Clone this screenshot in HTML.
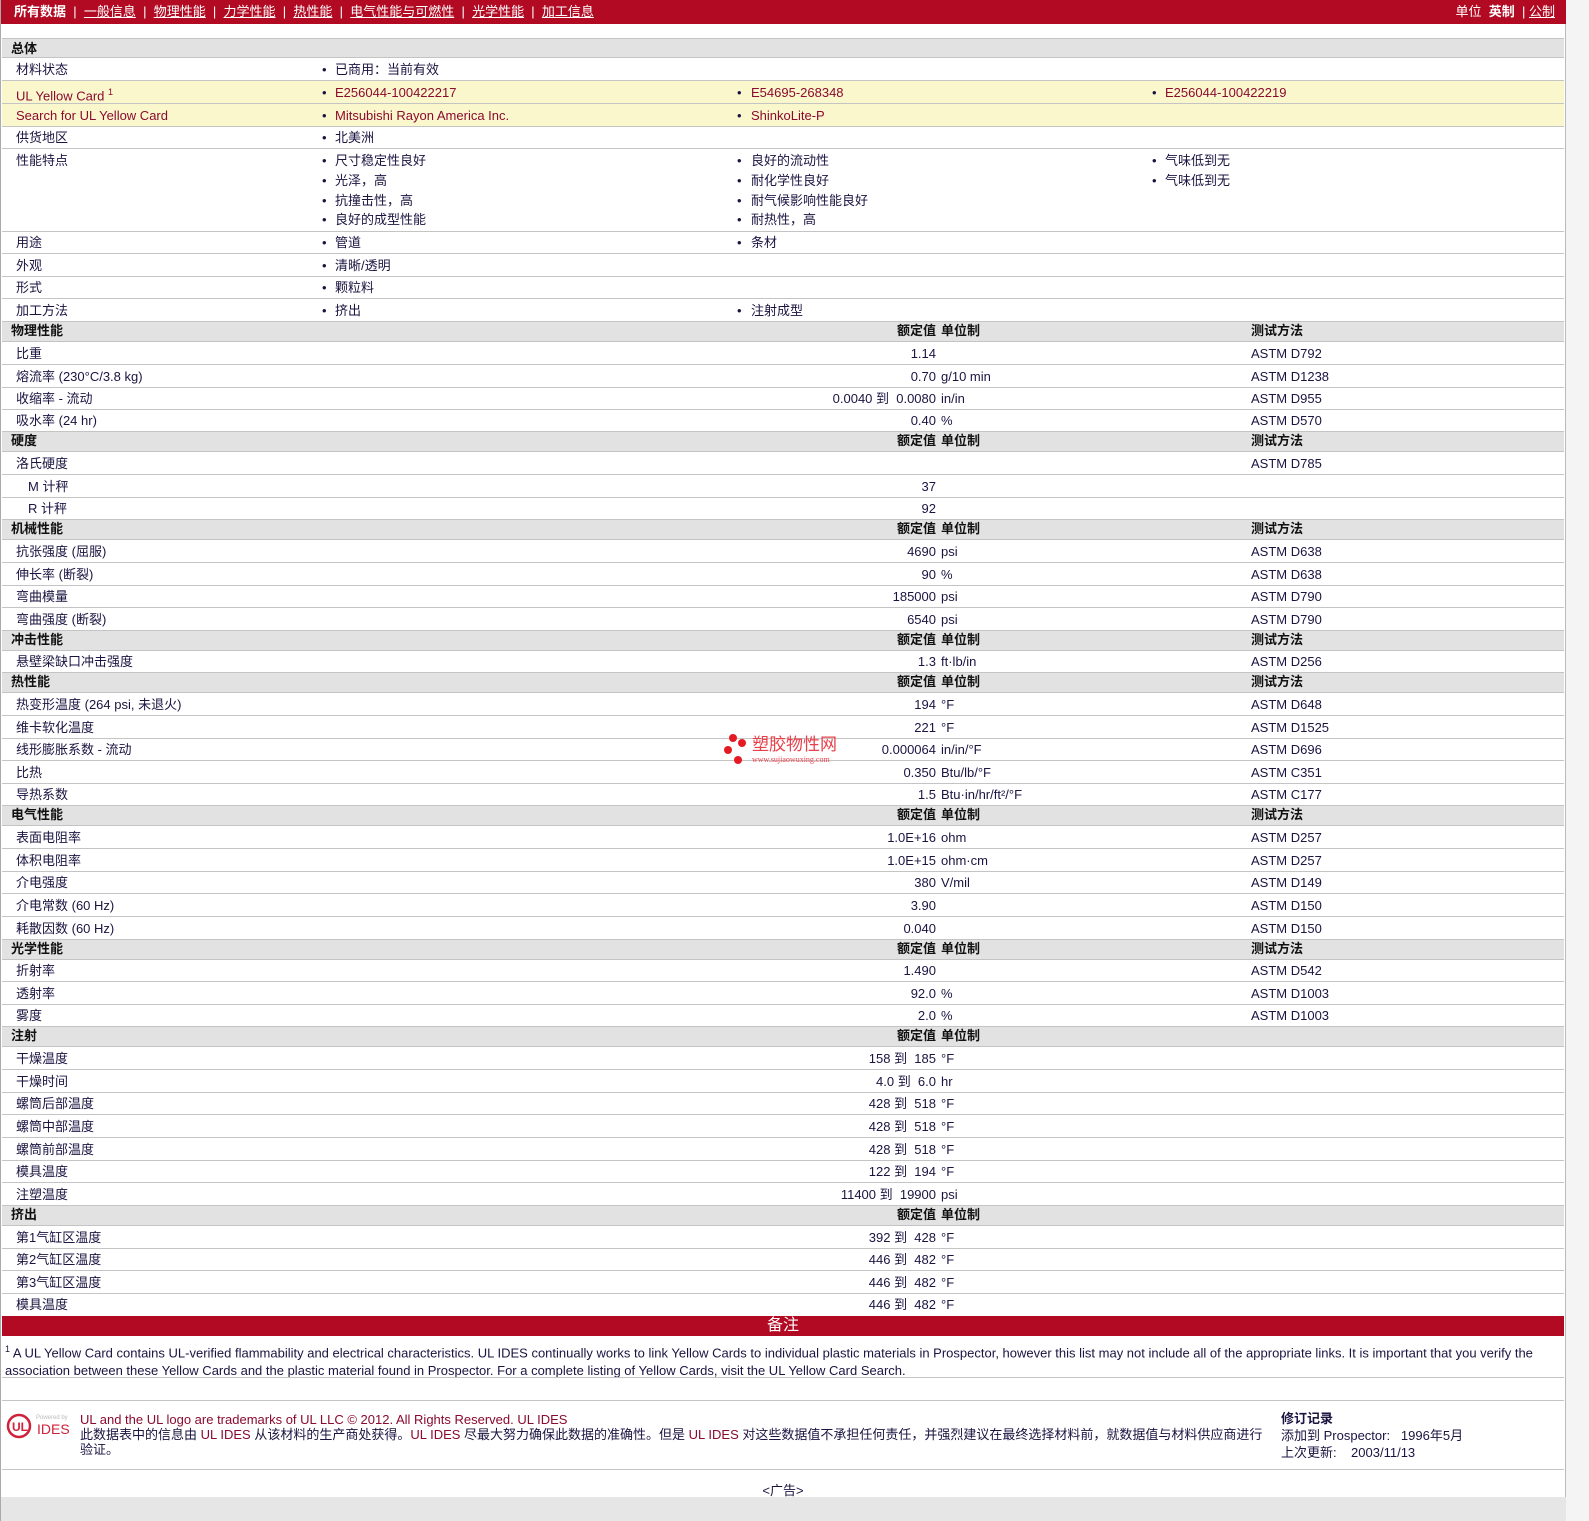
<!DOCTYPE html>
<html><head><meta charset="utf-8"><style>
*{margin:0;padding:0;box-sizing:border-box}
body{width:1589px;height:1521px;position:relative;background:#fff;font-family:"Liberation Sans","Noto Sans CJK SC",sans-serif;font-size:13px;color:#1a1440;overflow:hidden}
#pg{position:absolute;left:0;top:0;width:1566px;height:1521px;border-left:1px solid #aaa;border-right:1px solid #bbb;background:#fff}
#side{position:absolute;left:1566px;top:0;width:23px;height:1521px;background:#f4f4f4}
.bar{position:absolute;left:0;top:0;width:1566px;height:24px;background:#b20a22;color:#fff;font-size:13px;line-height:24px}
.bar a{color:#fff;text-decoration:underline}
.r{position:absolute;left:1px;width:1562px;border-bottom:1px solid #c4c4c4}
.r i{position:absolute;font-style:normal;white-space:nowrap}
.h{background:#e2e2e2;font-weight:bold;color:#111}
.y{background:#fbf7cc}
.l{left:14px}.s{left:26px}
.hl{left:9px}
.v{right:628px;text-align:right}
.u{left:939px}
.m{left:1249px}
.b1{left:320px}.b2{left:735px}.b3{left:1150px}
.t1{left:333px}.t2{left:749px}.t3{left:1163px}
.lk{color:#8a0a30}
.hv{right:628px}.hu{left:939px}.hm{left:1249px}
</style></head><body>
<div id="pg">
<div class="bar"><span style="position:absolute;left:13px"><b>所有数据</b> &nbsp;| &nbsp;<a>一般信息</a> &nbsp;| &nbsp;<a>物理性能</a> &nbsp;| &nbsp;<a>力学性能</a> &nbsp;| &nbsp;<a>热性能</a> &nbsp;| &nbsp;<a>电气性能与可燃性</a> &nbsp;| &nbsp;<a>光学性能</a> &nbsp;| &nbsp;<a>加工信息</a></span><span style="position:absolute;right:12px">单位 &nbsp;<b>英制</b> &nbsp;| <a>公制</a></span></div>
<div class="r" style="top:24px;height:15px;border-bottom:1px solid #c4c4c4"></div>

<div class="r h" style="top:39px;height:19px;line-height:19px"><i class="hl">总体</i></div>
<div class="r" style="top:58px;height:23px;line-height:23px"><i class="l">材料状态</i><i class="b1">•</i><i class="t1">已商用：当前有效</i></div>
<div class="r y" style="top:81px;height:23px;line-height:23px"><i class="l lk">UL Yellow Card <sup style="font-size:9px">1</sup></i><i class="b1">•</i><i class="t1 lk">E256044-100422217</i><i class="b2">•</i><i class="t2 lk">E54695-268348</i><i class="b3">•</i><i class="t3 lk">E256044-100422219</i></div>
<div class="r y" style="top:104px;height:23px;line-height:23px"><i class="l lk">Search for UL Yellow Card</i><i class="b1">•</i><i class="t1 lk">Mitsubishi Rayon America Inc.</i><i class="b2">•</i><i class="t2 lk">ShinkoLite-P</i></div>
<div class="r" style="top:127px;height:22px;line-height:22px"><i class="l">供货地区</i><i class="b1">•</i><i class="t1">北美洲</i></div>
<div class="r" style="top:149px;height:83px;line-height:20px;padding-top:2px"><i class="l" style="top:2px">性能特点</i>
<i class="b1" style="top:2px">•</i><i class="t1" style="top:2px">尺寸稳定性良好</i><i class="b1" style="top:22px">•</i><i class="t1" style="top:22px">光泽，高</i><i class="b1" style="top:42px">•</i><i class="t1" style="top:42px">抗撞击性，高</i><i class="b1" style="top:61px">•</i><i class="t1" style="top:61px">良好的成型性能</i>
<i class="b2" style="top:2px">•</i><i class="t2" style="top:2px">良好的流动性</i><i class="b2" style="top:22px">•</i><i class="t2" style="top:22px">耐化学性良好</i><i class="b2" style="top:42px">•</i><i class="t2" style="top:42px">耐气候影响性能良好</i><i class="b2" style="top:61px">•</i><i class="t2" style="top:61px">耐热性，高</i>
<i class="b3" style="top:2px">•</i><i class="t3" style="top:2px">气味低到无</i><i class="b3" style="top:22px">•</i><i class="t3" style="top:22px">气味低到无</i></div>
<div class="r" style="top:232px;height:22px;line-height:22px"><i class="l">用途</i><i class="b1">•</i><i class="t1">管道</i><i class="b2">•</i><i class="t2">条材</i></div>
<div class="r" style="top:254px;height:23px;line-height:23px"><i class="l">外观</i><i class="b1">•</i><i class="t1">清晰/透明</i></div>
<div class="r" style="top:277px;height:22px;line-height:22px"><i class="l">形式</i><i class="b1">•</i><i class="t1">颗粒料</i></div>
<div class="r" style="top:299px;height:23px;line-height:23px"><i class="l">加工方法</i><i class="b1">•</i><i class="t1">挤出</i><i class="b2">•</i><i class="t2">注射成型</i></div>

<div class="r h" style="top:322px;height:20px;line-height:18px"><i class="hl">物理性能</i><i class="hv">额定值</i><i class="hu">单位制</i><i class="hm">测试方法</i></div>
<div class="r" style="top:342px;height:23px;line-height:23px"><i class="l">比重</i><i class="v">1.14</i><i class="m">ASTM D792</i></div>
<div class="r" style="top:365px;height:23px;line-height:23px"><i class="l">熔流率 (230°C/3.8 kg)</i><i class="v">0.70</i><i class="u">g/10 min</i><i class="m">ASTM D1238</i></div>
<div class="r" style="top:388px;height:22px;line-height:22px"><i class="l">收缩率 - 流动</i><i class="v">0.0040 到 &nbsp;0.0080</i><i class="u">in/in</i><i class="m">ASTM D955</i></div>
<div class="r" style="top:410px;height:22px;line-height:22px"><i class="l">吸水率 (24 hr)</i><i class="v">0.40</i><i class="u">%</i><i class="m">ASTM D570</i></div>

<div class="r h" style="top:432px;height:20px;line-height:18px"><i class="hl">硬度</i><i class="hv">额定值</i><i class="hu">单位制</i><i class="hm">测试方法</i></div>
<div class="r" style="top:452px;height:23px;line-height:23px"><i class="l">洛氏硬度</i><i class="m">ASTM D785</i></div>
<div class="r" style="top:475px;height:23px;line-height:23px"><i class="s">M 计秤</i><i class="v">37</i></div>
<div class="r" style="top:498px;height:22px;line-height:22px"><i class="s">R 计秤</i><i class="v">92</i></div>

<div class="r h" style="top:520px;height:20px;line-height:18px"><i class="hl">机械性能</i><i class="hv">额定值</i><i class="hu">单位制</i><i class="hm">测试方法</i></div>
<div class="r" style="top:540px;height:23px;line-height:23px"><i class="l">抗张强度 (屈服)</i><i class="v">4690</i><i class="u">psi</i><i class="m">ASTM D638</i></div>
<div class="r" style="top:563px;height:23px;line-height:23px"><i class="l">伸长率 (断裂)</i><i class="v">90</i><i class="u">%</i><i class="m">ASTM D638</i></div>
<div class="r" style="top:586px;height:22px;line-height:22px"><i class="l">弯曲模量</i><i class="v">185000</i><i class="u">psi</i><i class="m">ASTM D790</i></div>
<div class="r" style="top:608px;height:23px;line-height:23px"><i class="l">弯曲强度 (断裂)</i><i class="v">6540</i><i class="u">psi</i><i class="m">ASTM D790</i></div>

<div class="r h" style="top:631px;height:20px;line-height:18px"><i class="hl">冲击性能</i><i class="hv">额定值</i><i class="hu">单位制</i><i class="hm">测试方法</i></div>
<div class="r" style="top:651px;height:22px;line-height:22px"><i class="l">悬壁梁缺口冲击强度</i><i class="v">1.3</i><i class="u">ft·lb/in</i><i class="m">ASTM D256</i></div>

<div class="r h" style="top:673px;height:20px;line-height:18px"><i class="hl">热性能</i><i class="hv">额定值</i><i class="hu">单位制</i><i class="hm">测试方法</i></div>
<div class="r" style="top:693px;height:23px;line-height:23px"><i class="l">热变形温度 (264 psi, 未退火)</i><i class="v">194</i><i class="u">°F</i><i class="m">ASTM D648</i></div>
<div class="r" style="top:716px;height:23px;line-height:23px"><i class="l">维卡软化温度</i><i class="v">221</i><i class="u">°F</i><i class="m">ASTM D1525</i></div>
<div class="r" style="top:739px;height:22px;line-height:22px"><i class="l">线形膨胀系数 - 流动</i><i class="v">0.000064</i><i class="u">in/in/°F</i><i class="m">ASTM D696</i></div>
<div class="r" style="top:761px;height:23px;line-height:23px"><i class="l">比热</i><i class="v">0.350</i><i class="u">Btu/lb/°F</i><i class="m">ASTM C351</i></div>
<div class="r" style="top:784px;height:22px;line-height:22px"><i class="l">导热系数</i><i class="v">1.5</i><i class="u">Btu·in/hr/ft²/°F</i><i class="m">ASTM C177</i></div>

<div class="r h" style="top:806px;height:20px;line-height:18px"><i class="hl">电气性能</i><i class="hv">额定值</i><i class="hu">单位制</i><i class="hm">测试方法</i></div>
<div class="r" style="top:826px;height:23px;line-height:23px"><i class="l">表面电阻率</i><i class="v">1.0E+16</i><i class="u">ohm</i><i class="m">ASTM D257</i></div>
<div class="r" style="top:849px;height:23px;line-height:23px"><i class="l">体积电阻率</i><i class="v">1.0E+15</i><i class="u">ohm·cm</i><i class="m">ASTM D257</i></div>
<div class="r" style="top:872px;height:22px;line-height:22px"><i class="l">介电强度</i><i class="v">380</i><i class="u">V/mil</i><i class="m">ASTM D149</i></div>
<div class="r" style="top:894px;height:23px;line-height:23px"><i class="l">介电常数 (60 Hz)</i><i class="v">3.90</i><i class="m">ASTM D150</i></div>
<div class="r" style="top:917px;height:23px;line-height:23px"><i class="l">耗散因数 (60 Hz)</i><i class="v">0.040</i><i class="m">ASTM D150</i></div>

<div class="r h" style="top:940px;height:20px;line-height:18px"><i class="hl">光学性能</i><i class="hv">额定值</i><i class="hu">单位制</i><i class="hm">测试方法</i></div>
<div class="r" style="top:960px;height:22px;line-height:22px"><i class="l">折射率</i><i class="v">1.490</i><i class="m">ASTM D542</i></div>
<div class="r" style="top:982px;height:23px;line-height:23px"><i class="l">透射率</i><i class="v">92.0</i><i class="u">%</i><i class="m">ASTM D1003</i></div>
<div class="r" style="top:1005px;height:22px;line-height:22px"><i class="l">雾度</i><i class="v">2.0</i><i class="u">%</i><i class="m">ASTM D1003</i></div>

<div class="r h" style="top:1027px;height:20px;line-height:18px"><i class="hl">注射</i><i class="hv">额定值</i><i class="hu">单位制</i></div>
<div class="r" style="top:1047px;height:23px;line-height:23px"><i class="l">干燥温度</i><i class="v">158 到 &nbsp;185</i><i class="u">°F</i></div>
<div class="r" style="top:1070px;height:23px;line-height:23px"><i class="l">干燥时间</i><i class="v">4.0 到 &nbsp;6.0</i><i class="u">hr</i></div>
<div class="r" style="top:1093px;height:22px;line-height:22px"><i class="l">螺筒后部温度</i><i class="v">428 到 &nbsp;518</i><i class="u">°F</i></div>
<div class="r" style="top:1115px;height:23px;line-height:23px"><i class="l">螺筒中部温度</i><i class="v">428 到 &nbsp;518</i><i class="u">°F</i></div>
<div class="r" style="top:1138px;height:23px;line-height:23px"><i class="l">螺筒前部温度</i><i class="v">428 到 &nbsp;518</i><i class="u">°F</i></div>
<div class="r" style="top:1161px;height:22px;line-height:22px"><i class="l">模具温度</i><i class="v">122 到 &nbsp;194</i><i class="u">°F</i></div>
<div class="r" style="top:1183px;height:23px;line-height:23px"><i class="l">注塑温度</i><i class="v">11400 到 &nbsp;19900</i><i class="u">psi</i></div>

<div class="r h" style="top:1206px;height:20px;line-height:18px"><i class="hl">挤出</i><i class="hv">额定值</i><i class="hu">单位制</i></div>
<div class="r" style="top:1226px;height:23px;line-height:23px"><i class="l">第1气缸区温度</i><i class="v">392 到 &nbsp;428</i><i class="u">°F</i></div>
<div class="r" style="top:1249px;height:22px;line-height:22px"><i class="l">第2气缸区温度</i><i class="v">446 到 &nbsp;482</i><i class="u">°F</i></div>
<div class="r" style="top:1271px;height:23px;line-height:23px"><i class="l">第3气缸区温度</i><i class="v">446 到 &nbsp;482</i><i class="u">°F</i></div>
<div class="r" style="top:1294px;height:22px;line-height:22px;border-bottom:none"><i class="l">模具温度</i><i class="v">446 到 &nbsp;482</i><i class="u">°F</i></div>

<div style="position:absolute;left:1px;top:1316px;width:1562px;height:20px;background:#b20a22;color:#fff;font-size:16px;line-height:20px;text-align:center">备注</div>
<div style="position:absolute;left:4px;top:1340px;width:1556px;line-height:18px;font-size:13px"><sup style="font-size:9px">1</sup> A UL Yellow Card contains UL-verified flammability and electrical characteristics. UL IDES continually works to link Yellow Cards to individual plastic materials in Prospector, however this list may not include all of the appropriate links. It is important that you verify the association between these Yellow Cards and the plastic material found in Prospector. For a complete listing of Yellow Cards, visit the UL Yellow Card Search.</div>
<div class="r" style="top:1377px;height:1px;background:#c4c4c4;border:none"></div>
<div class="r" style="top:1400px;height:1px;background:#c4c4c4;border:none"></div>

<svg style="position:absolute;left:5px;top:1412px" width="70" height="30" viewBox="0 0 70 30"><circle cx="13" cy="14" r="11" fill="none" stroke="#d0203a" stroke-width="2.5"/><text x="6" y="19" font-size="12" font-weight="bold" fill="#d0203a" font-family="Liberation Sans">UL</text><text x="30" y="7" font-size="6" fill="#bbb" font-family="Liberation Sans">Powered by</text><text x="31" y="22" font-size="14" fill="#d0203a" font-family="Liberation Sans">IDES</text></svg>
<div style="position:absolute;left:79px;top:1412px;width:1195px;line-height:15px;font-size:13px"><span class="lk">UL and the UL logo are trademarks of UL LLC © 2012. All Rights Reserved. UL IDES</span><br>此数据表中的信息由 <span class="lk">UL IDES</span> 从该材料的生产商处获得。<span class="lk">UL IDES</span> 尽最大努力确保此数据的准确性。但是 <span class="lk">UL IDES</span> 对这些数据值不承担任何责任，并强烈建议在最终选择材料前，就数据值与材料供应商进行验证。</div>
<div style="position:absolute;left:1280px;top:1410px;line-height:17px;font-size:13px"><b>修订记录</b><br>添加到 Prospector: &nbsp;&nbsp;1996年5月<br>上次更新: &nbsp;&nbsp;&nbsp;2003/11/13</div>
<div class="r" style="top:1469px;height:1px;background:#c4c4c4;border:none"></div>
<div style="position:absolute;left:0;top:1480px;width:1564px;text-align:center;font-size:13px">&lt;广告&gt;</div>
<div style="position:absolute;left:0;top:1497px;width:1566px;height:24px;background:#e6e6e6"></div>

<div style="position:absolute;left:722px;top:733px;width:130px;height:36px">
<span style="position:absolute;left:6px;top:1px;width:8px;height:8px;border-radius:50%;background:#e41b23"></span>
<span style="position:absolute;left:15px;top:6px;width:8px;height:8px;border-radius:50%;background:#e41b23"></span>
<span style="position:absolute;left:1px;top:13px;width:8px;height:8px;border-radius:50%;background:#e41b23"></span>
<span style="position:absolute;left:11px;top:23px;width:8px;height:8px;border-radius:50%;background:#e41b23"></span>
<span style="position:absolute;left:29px;top:3px;font-size:17px;color:#e8404a;line-height:18px">塑胶物性网</span>
<span style="position:absolute;left:29px;top:22px;font-size:8px;color:#e8404a;font-family:'Liberation Serif',serif">www.sujiaowuxing.com</span>
</div>
</div>
<div id="side"></div>
</body></html>
